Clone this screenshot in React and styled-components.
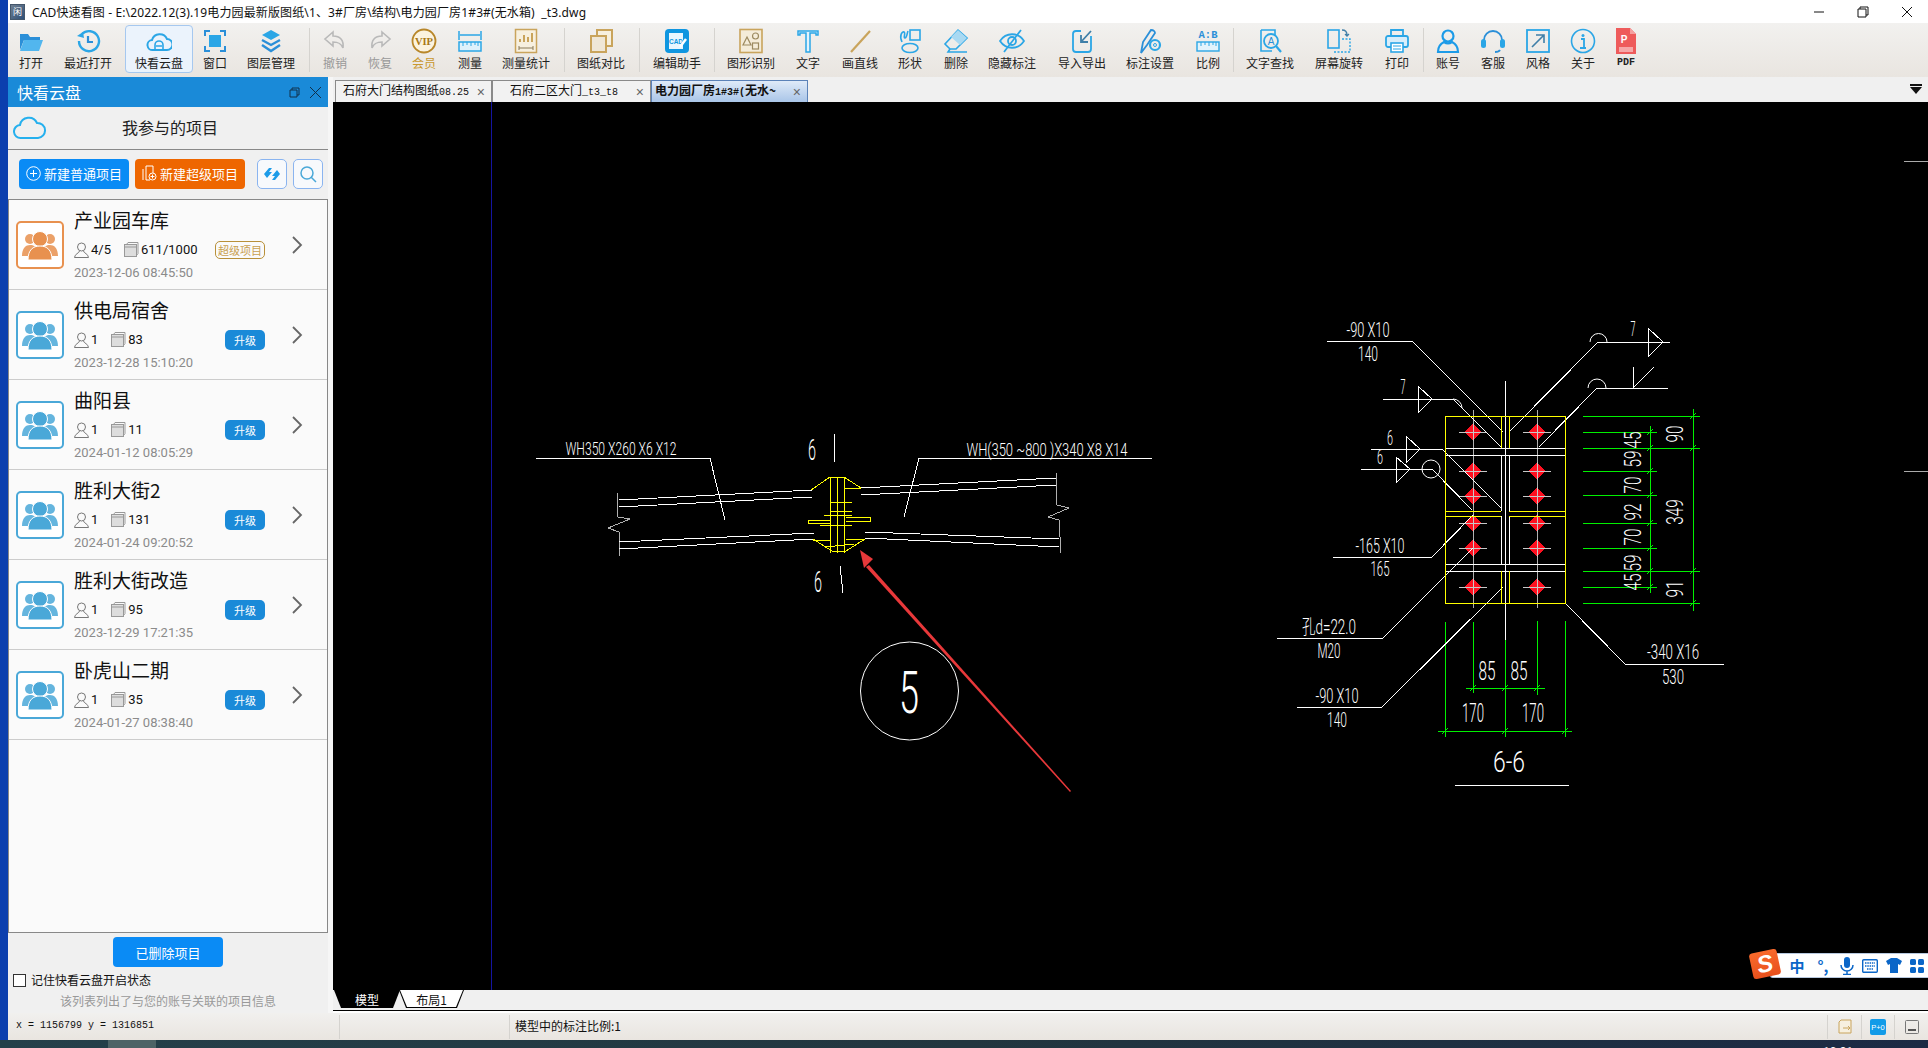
import React from 'react';
import styled, { createGlobalStyle } from 'styled-components';

const CJK = '"Noto Sans CJK SC", "Noto Sans", sans-serif';
const SKY = '#2ba6e6';
const TAN = '#c9a45c';

const GlobalStyle = createGlobalStyle`
    html, body { margin: 0; padding: 0; background: #0b3fae; }
    body { font-family: ${CJK}; color: #111; }
    * { box-sizing: border-box; }
`;

const Page = styled.div`
    width: 1928px;
    height: 1048px;
    display: flex;
    flex-direction: column;
    overflow: hidden;
`;
const Upper = styled.div`
    flex: 1;
    display: flex;
    min-height: 0;
    background: #0b3fae;
    padding-left: 8px;
`;
const AppWindow = styled.div`
    flex: 1;
    display: flex;
    flex-direction: column;
    min-width: 0;
`;
const TitleBar = styled.div`
    height: 23px;
    background: #fff;
    display: flex;
    align-items: center;
    padding-left: 2px;
    font-size: 12px;
    position: relative;
`;
const AppLogo = styled.div`
    width: 15px;
    height: 16px;
    margin-right: 7px;
    background: linear-gradient(135deg, #6f7f90, #2f4f78);
    border: 1px solid #44566a;
    color: #fff;
    font-size: 9px;
    line-height: 14px;
    text-align: center;
`;
const TitleText = styled.div`
    flex: 1;
    white-space: pre;
    letter-spacing: .13px;
    font-family: "Noto Sans", "Noto Sans CJK SC", sans-serif;
`;
const WindowButtons = styled.div`
    display: flex;
    align-items: center;
    gap: 32px;
    padding-right: 15px;
`;
const Toolbar = styled.div`
    height: 54px;
    display: flex;
    align-items: flex-start;
    padding-left: 1px;
    background: linear-gradient(#f2f1ef, #e9e5e0);
`;
const ToolButton = styled.div`
    width: ${p => p.$w}px;
    margin-left: ${p => p.$ml}px;
    margin-top: 2px;
    height: 48px;
    display: flex;
    flex-direction: column;
    align-items: center;
    padding-top: 2px;
    flex: none;
    border-radius: 4px;
    border: 1px solid ${p => (p.$active ? '#a6c8ef' : 'transparent')};
    background: ${p => (p.$active ? '#ebf3fc' : 'transparent')};
`;
const ToolIcon = styled.div`
    height: 26px;
    display: flex;
    align-items: center;
    justify-content: center;
`;
const ToolLabel = styled.div`
    font-size: 12px;
    line-height: 16px;
    margin-top: 1px;
    white-space: nowrap;
    color: ${p => p.$color || '#222'};
`;
const PdfLabel = styled(ToolLabel)`
    font: 700 10px/16px "Liberation Mono", monospace;
`;
const ToolSep = styled.div`
    width: 1px;
    height: 44px;
    margin: 5px 0 0 ${p => p.$ml}px;
    background: #d5d3cf;
    flex: none;
`;
const Body = styled.div`
    flex: 1;
    display: flex;
    min-height: 0;
    background: #f6f6f6;
`;
const Panel = styled.div`
    width: 320px;
    display: flex;
    flex-direction: column;
    background: #f0f0f0;
    flex: none;
`;
const PanelHeader = styled.div`
    height: 30px;
    background: #1a8ad8;
    color: #fff;
    display: flex;
    align-items: center;
    padding: 0 7px 0 9px;
    font-size: 16px;
`;
const PanelTitle = styled.div`
    flex: 1;
`;
const PanelTools = styled.div`
    display: flex;
    align-items: center;
    gap: 10px;
`;
const SubHeader = styled.div`
    height: 43px;
    display: flex;
    align-items: center;
    padding: 0 0 2px 5px;
    border-bottom: 1px solid #888;
`;
const SubTitle = styled.div`
    flex: 1;
    margin-left: -34px;
    text-align: center;
    font-size: 16px;
    color: #222;
`;
const ActionRow = styled.div`
    height: 49px;
    display: flex;
    align-items: center;
    padding: 0 5px 1px 11px;
`;
const ActionButton = styled.div`
    width: 110px;
    height: 30px;
    margin-right: 6px;
    padding-bottom: 2px;
    border-radius: 4px;
    background: ${p => p.$bg};
    color: #fff;
    font-size: 13px;
    display: flex;
    align-items: center;
    justify-content: center;
    gap: 3px;
`;
const IconButton = styled.div`
    width: 30px;
    height: 30px;
    margin-left: ${p => p.$ml}px;
    border-radius: 5px;
    border: 1px solid #8ab4f0;
    background: #f7f9fc;
    display: flex;
    align-items: center;
    justify-content: center;
`;
const ProjectList = styled.div`
    height: 734px;
    border: 1px solid #888;
    background: #fafafa;
    display: flex;
    flex-direction: column;
`;
const ProjectRow = styled.div`
    height: 90px;
    flex: none;
    display: flex;
    align-items: center;
    padding-left: 7px;
    border-bottom: 1px solid #ccc;
`;
const ProjectIcon = styled.div`
    width: 48px;
    height: 48px;
    border-radius: 5px;
    border: 2px solid ${p => p.$color};
    background: #fff;
    display: flex;
    align-items: center;
    justify-content: center;
    flex: none;
`;
const ProjectInfo = styled.div`
    width: 191px;
    height: 90px;
    margin-left: 10px;
    padding-top: 5px;
    flex: none;
`;
const ProjectName = styled.div`
    font-size: 19px;
    line-height: 30px;
    margin-bottom: 3px;
    color: #111;
`;
const MetaRow = styled.div`
    height: 24px;
    display: flex;
    align-items: center;
    font: 13px/24px Roboto, ${CJK};
    color: #111;
`;
const MetaValue = styled.span`
    margin: 0 13px 0 2px;
`;
const Badge = styled.div`
    margin-left: auto;
    flex: none;
    font-size: 11px;
    font-family: ${CJK};
    white-space: nowrap;
    display: flex;
    align-items: center;
    justify-content: center;
    border-radius: 5px;
    ${p => (p.$super
        ? 'width: 50px; height: 18px; border: 1px solid #b8903a; color: #c9a050;'
        : 'width: 40px; height: 20px; background: #1a8ad8; color: #fff;')}
`;
const ProjectDate = styled.div`
    font: 13px/22px Roboto, sans-serif;
    color: #8b8b8b;
`;
const Chevron = styled.div`
    margin-left: 27px;
    display: flex;
`;
const PanelFooter = styled.div`
    flex: 1;
    display: flex;
    flex-direction: column;
    align-items: flex-start;
`;
const DeletedButton = styled.div`
    width: 110px;
    height: 30px;
    margin: 4px 0 0 105px;
    background: #0a8bf5;
    color: #fff;
    border-radius: 4px;
    font-size: 13px;
    display: flex;
    align-items: center;
    justify-content: center;
`;
const RememberRow = styled.label`
    display: flex;
    align-items: center;
    gap: 5px;
    margin: 6px 0 0 5px;
    font-size: 12px;
    line-height: 14px;
`;
const CheckBox = styled.span`
    width: 13px;
    height: 13px;
    border: 1px solid #333;
    background: #fff;
`;
const PanelHint = styled.div`
    width: 100%;
    text-align: center;
    font-size: 12px;
    line-height: 16px;
    margin-top: 6px;
    color: #999;
`;
const Gutter = styled.div`
    width: 5px;
    flex: none;
`;
const Workspace = styled.div`
    flex: 1;
    display: flex;
    flex-direction: column;
    min-width: 0;
    background: #f0f0f0;
`;
const TabStrip = styled.div`
    height: 25px;
    display: flex;
    padding: 3px 0 0 2px;
    position: relative;
`;
const DocTab = styled.div`
    width: ${p => p.$w}px;
    height: 22px;
    display: flex;
    align-items: center;
    padding: 0 6px 0 ${p => p.$pl}px;
    font: ${p => (p.$active ? 700 : 400)} 12px/20px ${CJK};
    white-space: nowrap;
    overflow: hidden;
    border: 1px solid ${p => (p.$active ? '#5b82b8' : '#8a8a8a')};
    border-bottom: none;
    background: ${p => (p.$active ? 'linear-gradient(#dfeaf8, #a9c5e8)' : '#f2f2f2')};
`;
const TabName = styled.span`
    flex: 1;
    overflow: hidden;
`;
const TabLatin = styled.span`
    font-family: "Liberation Mono", monospace;
    font-size: 10px;
`;
const TabClose = styled.span`
    color: #666;
    font: 14px/14px "Liberation Sans", sans-serif;
`;
const TabMenu = styled.div`
    position: absolute;
    right: 6px;
    top: 7px;
    display: flex;
    flex-direction: column;
    align-items: center;
    gap: 1px;
`;
const TabMenuBar = styled.div`
    width: 12px;
    height: 2px;
    background: #111;
`;
const TabMenuArrow = styled.div`
    border-left: 6px solid transparent;
    border-right: 6px solid transparent;
    border-top: 7px solid #111;
`;
const Canvas = styled.div`
    height: 888px;
    background: #000;
    position: relative;
    flex: none;
`;
const Drawing = styled.svg`
    display: block;
    width: 100%;
    height: 100%;
`;
const CadLabel = styled.text`
    fill: #fff;
    font-family: Roboto, ${CJK};
    font-weight: 300;
    text-anchor: middle;
    dominant-baseline: central;
`;
const ImeBar = styled.div`
    position: absolute;
    right: 0;
    bottom: 12px;
    width: 158px;
    height: 25px;
    background: #fff;
    border: 1px solid #b7c8de;
    border-right: none;
    border-radius: 3px 0 0 3px;
    display: flex;
    align-items: center;
    padding-left: 17px;
    gap: 8px;
    color: #0a66c8;
`;
const ImeLogo = styled.div`
    position: absolute;
    left: -20px;
    top: -3px;
    width: 28px;
    height: 26px;
    border-radius: 3px;
    transform: rotate(-12deg);
    background: linear-gradient(#f96a2c, #e8501c);
    color: #fff;
    font: italic 700 24px/25px "Liberation Sans", sans-serif;
    text-align: center;
`;
const ImeChar = styled.span`
    width: 18px;
    font: 700 15px/18px ${CJK};
    text-align: center;
`;
const LayoutTabs = styled.div`
    height: 23px;
    display: flex;
    align-items: flex-start;
    background: #f0f0f0;
    padding-left: 1px;
    box-shadow: inset 0 -2px 0 #fff, inset 0 -3px 0 #000;
`;
const LayoutTab = styled.div`
    width: ${p => p.$w}px;
    height: 18px;
    margin-right: ${p => p.$mr}px;
    background: #000;
    clip-path: polygon(0 0, 100% 0, calc(100% - 7px) 100%, 7px 100%);
    position: relative;
    display: flex;
    align-items: center;
    justify-content: center;
    font-size: 12px;
    color: ${p => (p.$active ? '#fff' : '#111')};
    &::before {
        content: '';
        display: ${p => (p.$active ? 'none' : 'block')};
        position: absolute;
        inset: 0 1px 1px;
        background: #fff;
        clip-path: polygon(0 0, 100% 0, calc(100% - 7px) 100%, 7px 100%);
    }
`;
const LayoutTabText = styled.span`
    position: relative;
`;
const StatusBar = styled.div`
    height: 27px;
    display: flex;
    align-items: center;
    background: linear-gradient(#f1f0ee, #e9e5e0);
`;
const StatusCoords = styled.div`
    width: 331px;
    padding: 0 0 2px 8px;
    font: 10px/14px "Liberation Mono", monospace;
    color: #111;
`;
const StatusSep = styled.div`
    width: 1px;
    height: 24px;
    background: #d5d3cf;
    flex: none;
`;
const StatusGap = styled.div`
    width: 169px;
`;
const StatusScale = styled.div`
    flex: 1;
    padding: 0 0 2px 5px;
    font-size: 12px;
`;
const StatusIcon = styled.div`
    width: ${p => p.$w}px;
    display: flex;
    justify-content: center;
`;
const Taskbar = styled.div`
    height: 8px;
    flex: none;
    background: linear-gradient(90deg, #24404a, #22363f 50%, #1c2a44);
    position: relative;
    display: flex;
    overflow: hidden;
`;
const TaskItem = styled.div`
    width: 48px;
    margin-left: 108px;
    background: #4d6366;
`;
const TaskClock = styled.div`
    position: absolute;
    left: 1823px;
    top: 5px;
    color: #fff;
    font: 12px/14px Roboto, sans-serif;
`;

// toolbar icons, all drawn on a 26x26 grid
const Svg = ({ children, w = 26, h = 26 }) => (
    <svg width={w} height={h} viewBox={`0 0 ${w} ${h}`} fill="none">{children}</svg>
);

const icons = {
    open: <Svg><path d="M2 6h8l2 3h10v3H6l-4 10z" fill="#2b8fd8" /><path d="M6 12h19l-4 11H2z" fill="#52b6ee" /></Svg>,
    recent: <Svg><path d="M7 6a10 10 0 1 1-3 7" stroke={SKY} strokeWidth="2.4" /><path d="M2 8l6-4 1 6z" fill={SKY} /><path d="M13 8v6h5" stroke="#2b8fd8" strokeWidth="2.2" /></Svg>,
    cloud: <Svg><path d="M7 22a5 5 0 0 1-1-10 8 8 0 0 1 15-1 5.500 5.500 0 0 1 0 11z" stroke={SKY} strokeWidth="2" /><path d="M9 22v-5a4 4 0 0 1 8 0v5M10 18h6" stroke={SKY} strokeWidth="1.6" /></Svg>,
    window: <Svg><rect x="7" y="7" width="12" height="12" fill={SKY} /><path d="M3 8V3h5M18 3h5v5M23 18v5h-5M8 23H3v-5" stroke="#2b8fd8" strokeWidth="2" /></Svg>,
    layers: <Svg><path d="M13 2l9 5-9 5-9-5z" fill={SKY} /><path d="M4 12l9 5 9-5M4 17l9 6 9-6" stroke="#2b8fd8" strokeWidth="2.4" /></Svg>,
    undo: <Svg><path d="M11 4L3 11l8 7v-4c5 0 8 1 10 6 1-8-3-12-10-12z" stroke="#b9b9b9" strokeWidth="1.6" /></Svg>,
    redo: <Svg><path d="M15 4l8 7-8 7v-4c-5 0-8 1-10 6-1-8 3-12 10-12z" stroke="#b9b9b9" strokeWidth="1.6" /></Svg>,
    vip: <Svg><circle cx="13" cy="13" r="11.500" stroke="#b8872a" strokeWidth="1.800" fill="#fbf3df" /><text x="13" y="17" textAnchor="middle" fontFamily="Liberation Serif" fontWeight="700" fontSize="10.500" fill="#a87716">VIP</text></Svg>,
    measure: <Svg><path d="M2 3v9M24 3v9M3 7h20" stroke={SKY} strokeWidth="1.500" /><rect x="2" y="14" width="22" height="9" stroke={SKY} strokeWidth="1.500" fill="#dff1fb" /><path d="M6 14v4M10 14v3M14 14v4M18 14v3M21 14v4" stroke={SKY} /></Svg>,
    stats: <Svg><rect x="2.500" y="1.500" width="21" height="23" stroke={TAN} strokeWidth="1.500" fill="#f7f0df" /><path d="M7 14v-3M11 14V7M15 14v-5M19 14V5" stroke={TAN} strokeWidth="2" /><path d="M6 20h14M6 18v4M20 18v4" stroke="#8a7a58" /></Svg>,
    compare: <Svg><rect x="9" y="2" width="15" height="16" stroke={TAN} strokeWidth="2" fill="#f7f0df" /><rect x="3" y="8" width="15" height="16" stroke={TAN} strokeWidth="2" fill="#efe7d7" /></Svg>,
    assist: <Svg><rect x="1" y="1" width="24" height="24" rx="4" fill="#0f96e0" /><rect x="5" y="5" width="14" height="16" fill="#e8f6fe" /><text x="12" y="16" textAnchor="middle" fontFamily="Liberation Sans" fontWeight="700" fontSize="6.500" fill="#0f96e0">CAD</text><path d="M16 19l6-8" stroke="#fff" strokeWidth="2.500" /></Svg>,
    figure: <Svg><rect x="2" y="1.500" width="22" height="23" stroke={TAN} strokeWidth="1.600" fill="#f4ecd9" /><path d="M9 9l4 8H5z" stroke="#9c8a60" strokeWidth="1.200" /><circle cx="17.500" cy="8" r="3" stroke="#9c8a60" strokeWidth="1.200" /><rect x="14.500" y="15" width="6" height="6" stroke="#9c8a60" strokeWidth="1.200" /></Svg>,
    text: <Svg><path d="M3 7V3h20v4H21V5h-6v19h-4V5H5v2z" stroke={SKY} strokeWidth="1.500" fill="#e2f3fc" /></Svg>,
    line: <Svg><path d="M4 24L23 3" stroke={TAN} strokeWidth="2.200" /></Svg>,
    shape: <Svg><rect x="13" y="2" width="10" height="10" stroke={SKY} strokeWidth="1.600" /><ellipse cx="13" cy="20" rx="8" ry="4.500" stroke={SKY} strokeWidth="1.600" /><path d="M5 14c-3-6 0-11 2-10 2 1-1 6 1 6s2-5 3-7" stroke={SKY} strokeWidth="1.600" /></Svg>,
    eraser: <Svg><path d="M15 2l9 8-11 11H7L2 16z" stroke={SKY} strokeWidth="1.600" /><path d="M15 2l9 8-7 7-9-8z" fill="#a9d9f2" /><path d="M7 21l-2 3h19" stroke={SKY} strokeWidth="1.600" /></Svg>,
    hide: <Svg><path d="M1 13c6-9 18-9 24 0-6 9-18 9-24 0z" stroke={SKY} strokeWidth="1.800" /><circle cx="13" cy="13" r="4" stroke={SKY} strokeWidth="1.800" /><path d="M5 24L22 2" stroke={SKY} strokeWidth="1.800" /></Svg>,
    transfer: <Svg><path d="M12 3H7a3 3 0 0 0-3 3v15a3 3 0 0 0 3 3h12a3 3 0 0 0 3-3V8" stroke={SKY} strokeWidth="1.800" /><path d="M22 3L12 14M12 7v7h7" stroke="#3f7fa8" strokeWidth="1.800" /></Svg>,
    settings: <Svg><path d="M4 25l2-11 8-12c3 0 4 2 4 3l-8 12z" stroke="#2b8fd8" strokeWidth="1.800" /><circle cx="18" cy="17" r="5" stroke={SKY} strokeWidth="2.200" /><circle cx="18" cy="17" r="1.500" stroke={SKY} /></Svg>,
    ratio: <Svg><text x="13" y="10" textAnchor="middle" fontFamily="Liberation Mono" fontWeight="700" fontSize="10.500" fill="#2b8fd8">A:B</text><rect x="2" y="14" width="22" height="9" stroke={SKY} strokeWidth="1.400" fill="#e2f3fc" /><path d="M6 14v4M10 14v3M14 14v4M18 14v3M21 14v4" stroke={SKY} /></Svg>,
    find: <Svg><path d="M4 2h14v6M4 2v21h11" stroke={SKY} strokeWidth="1.600" /><circle cx="14" cy="13" r="7" stroke={SKY} strokeWidth="1.800" /><text x="14" y="17" textAnchor="middle" fontFamily="Liberation Sans" fontSize="10" fill="#2b8fd8">A</text><path d="M19 18l5 6" stroke={SKY} strokeWidth="2.200" /></Svg>,
    rotate: <Svg><rect x="2" y="2" width="11" height="18" stroke={SKY} strokeWidth="1.600" /><path d="M8 24h16V11h-9" stroke={SKY} strokeWidth="1.400" strokeDasharray="2 1.500" /><path d="M16 2c3 0 5 2 5 5M19 6l2 2 2-2" stroke="#3f7fa8" strokeWidth="1.300" /></Svg>,
    print: <Svg><path d="M7 8V2h12v6" stroke={SKY} strokeWidth="1.800" /><rect x="2" y="8" width="22" height="11" rx="2" stroke={SKY} strokeWidth="1.800" fill="#d8eefb" /><rect x="7" y="15" width="12" height="9" stroke={SKY} strokeWidth="1.600" fill="#fff" /><path d="M9 18h8M9 21h8" stroke={SKY} /></Svg>,
    user: <Svg><circle cx="13" cy="8" r="5.500" stroke="#1c9be8" strokeWidth="2.200" /><path d="M3 24c0-6 4-9 6-10 3 2 5 2 8 0 2 1 6 4 6 10z" stroke="#1c9be8" strokeWidth="2.200" /></Svg>,
    service: <Svg><path d="M4 14v-2a9 9 0 0 1 18 0v2M20 22c-1 2-3 2-5 2" stroke="#2b8fd8" strokeWidth="1.800" /><rect x="1" y="11" width="5" height="9" rx="2.500" fill={SKY} /><rect x="20" y="11" width="5" height="9" rx="2.500" fill={SKY} /></Svg>,
    style: <Svg><rect x="2" y="2" width="22" height="22" stroke={SKY} strokeWidth="1.800" /><path d="M7 19L19 7M11 7h8v8" stroke="#3f7fa8" strokeWidth="1.600" /></Svg>,
    about: <Svg><circle cx="13" cy="13" r="11.500" stroke={SKY} strokeWidth="1.600" /><circle cx="13" cy="7.500" r="1.500" fill={SKY} /><path d="M11 11h3v9M10 20h6" stroke={SKY} strokeWidth="1.800" /></Svg>,
    pdf: <Svg><path d="M3 0h14l6 6v20H3z" fill="#ee5b5b" /><path d="M17 0l6 6h-6z" fill="#f6a0a0" /><rect x="6" y="19" width="14" height="5" fill="#f6a8a8" /><text x="11" y="15" textAnchor="middle" fontFamily="Liberation Sans" fontWeight="700" fontSize="10" fill="#fff">P</text></Svg>,
};

const tools = [
    { label: '打开', icon: 'open', w: 44, ml: 0 },
    { label: '最近打开', icon: 'recent', w: 60, ml: 5 },
    { label: '快看云盘', icon: 'cloud', w: 68, ml: 7, active: true },
    { label: '窗口', icon: 'window', w: 40, ml: 2 },
    { label: '图层管理', icon: 'layers', w: 60, ml: 6 },
    { sep: true, ml: 8 },
    { label: '撤销', icon: 'undo', w: 40, ml: 5, color: '#999' },
    { label: '恢复', icon: 'redo', w: 40, ml: 5, color: '#999' },
    { label: '会员', icon: 'vip', w: 40, ml: 4, color: '#c9982f' },
    { label: '测量', icon: 'measure', w: 40, ml: 6 },
    { label: '测量统计', icon: 'stats', w: 60, ml: 6 },
    { sep: true, ml: 8 },
    { label: '图纸对比', icon: 'compare', w: 60, ml: 6 },
    { sep: true, ml: 8 },
    { label: '编辑助手', icon: 'assist', w: 60, ml: 7 },
    { sep: true, ml: 7 },
    { label: '图形识别', icon: 'figure', w: 60, ml: 6 },
    { label: '文字', icon: 'text', w: 40, ml: 7 },
    { label: '画直线', icon: 'line', w: 50, ml: 7 },
    { label: '形状', icon: 'shape', w: 40, ml: 5 },
    { label: '删除', icon: 'eraser', w: 40, ml: 6 },
    { label: '隐藏标注', icon: 'hide', w: 60, ml: 6 },
    { label: '导入导出', icon: 'transfer', w: 60, ml: 10 },
    { label: '标注设置', icon: 'settings', w: 60, ml: 8 },
    { label: '比例', icon: 'ratio', w: 40, ml: 8 },
    { sep: true, ml: 5 },
    { label: '文字查找', icon: 'find', w: 60, ml: 6 },
    { label: '屏幕旋转', icon: 'rotate', w: 60, ml: 9 },
    { label: '打印', icon: 'print', w: 40, ml: 8 },
    { sep: true, ml: 6 },
    { label: '账号', icon: 'user', w: 40, ml: 4 },
    { label: '客服', icon: 'service', w: 40, ml: 5 },
    { label: '风格', icon: 'style', w: 40, ml: 5 },
    { label: '关于', icon: 'about', w: 40, ml: 5 },
    { label: 'PDF', icon: 'pdf', w: 40, ml: 3, mono: true },
];

const projects = [
    { name: '产业园车库', members: '4/5', files: '611/1000', date: '2023-12-06 08:45:50', isSuper: true },
    { name: '供电局宿舍', members: '1', files: '83', date: '2023-12-28 15:10:20' },
    { name: '曲阳县', members: '1', files: '11', date: '2024-01-12 08:05:29' },
    { name: '胜利大街2', members: '1', files: '131', date: '2024-01-24 09:20:52' },
    { name: '胜利大街改造', members: '1', files: '95', date: '2023-12-29 17:21:35' },
    { name: '卧虎山二期', members: '1', files: '35', date: '2024-01-27 08:38:40' },
];

const PeopleIcon = ({ color }) => (
    <svg width="36" height="30" viewBox="0 0 36 30">
        <circle cx="8" cy="9" r="5" fill={color} opacity=".85" />
        <circle cx="28" cy="9" r="5" fill={color} opacity=".85" />
        <path d="M0 26c0-8 4-11 8-11s6 2 6 4l-4 7zM36 26c0-8-4-11-8-11s-6 2-6 4l4 7z" fill={color} opacity=".85" />
        <circle cx="18" cy="9" r="7.500" fill={color} stroke="#fff" />
        <path d="M6 30c0-10 5-14 12-14s12 4 12 14z" fill={color} stroke="#fff" />
    </svg>
);
const PersonGlyph = () => (
    <svg width="15" height="16" viewBox="0 0 15 16" fill="none" style={{ flex: 'none' }}>
        <circle cx="7.500" cy="5" r="4" stroke="#777" />
        <path d="M5.500 9c0 2-5 3-5 6.500h14c0-3.500-5-4.500-5-6.500" stroke="#777" />
    </svg>
);
const FolderGlyph = () => (
    <svg width="15" height="15" viewBox="0 0 15 15" fill="none" style={{ flex: 'none' }}>
        <path d="M2.500 2.500L4 .500h10v11l-1.500 2" stroke="#999" />
        <rect x=".500" y="2.500" width="12" height="12" fill="#ddd" stroke="#999" />
        <path d="M.500 5h12" stroke="#999" />
    </svg>
);

// CAD sheet, in page coordinates so the numbers read off the screen directly
const whiteLines = [
    '1327,341 1412,341 1503,432', '1670,342 1598,342 1510,431', '1668,388 1597,388 1539,447',
    '1383,399 1453,399 1501,447', '1371,449 1442,449 1501,508', '1361,469 1432,469 1472,510',
    '1333,557 1432,557 1473,515', '1277,638 1383,638 1473,548', '1297,707 1382,707 1503,587',
    '1566,604 1625,664 1724,664', '1648,328 1663,342 1648,357 1648,328', '1633,367 1633,388 1654,367',
    '1418,386 1432,399 1418,413 1418,386', '1406,436 1420,449 1406,463 1406,436', '1396,457 1410,469 1396,483 1396,457',
    '1445,448 1565,448', '1445,455 1565,455', '1445,564 1565,564', '1445,571 1565,571',
    '1501,455 1501,511', '1509,455 1509,511', '1501,516 1501,564', '1509,516 1509,564', '1505,381 1505,640',
    '1455,785 1569,785',
    '536,458 710,458 725,520', '1152,458 919,458 904,517',
    '834,434 835,462', '840,566 843,593',
    '619,500 812,490', '619,507 812,497', '861,488 1056,478', '861,495 1056,485',
    '619,542 814,533', '619,549 814,539', '865,532 1059,539', '865,538 1059,547',
];
const grayLines = [
    '617,493 618,517 630,519 608,528 619,532 620,556', '1056,472 1057,505 1069,508 1048,517 1059,520 1061,553',
    '1473,410 1473,608', '1537,410 1537,608',
];
const yellowLines = [
    '1445,416 1565,416 1565,603 1445,603 1445,416', '1501,416 1501,448', '1509,416 1509,448',
    '1445,511 1501,511', '1445,516 1501,516', '1509,511 1565,511', '1509,516 1565,516',
    '1501,571 1501,603', '1509,571 1509,603',
    '811,490 830,477 844,477 861,488', '830,477 830,553', '837,477 837,553', '844,477 844,553',
    '813,539 832,551 846,551 865,539', '845,488 861,488', '831,502 852,502', '830,511 852,511', '824,515 852,515',
    '808,520 830,520 830,523 808,523 808,520', '846,517 870,517 870,521 846,521', '820,525 852,525',
    '813,540 831,540', '846,539 864,539', '825,547 854,544',
];
const greenLines = [
    ...[432, 471, 495, 523, 548, 587].map(y => `1583,${y} 1657,${y}`),
    ...[416, 448, 571, 603].map(y => `1583,${y} 1700,${y}`),
    '1650,426 1650,593', '1693,409 1693,611',
    '1445,622 1445,737', '1473,622 1473,693', '1505,640 1505,737', '1537,621 1537,695', '1565,621 1565,737',
    '1466,688 1545,688', '1438,731 1572,731',
];
const tickPoints = [
    ...[416, 448, 571, 603].map(y => [1693, y]), ...[432, 448, 471, 495, 523, 548, 571, 587].map(y => [1650, y]),
    [1473, 688], [1505, 688], [1537, 688], [1445, 731], [1505, 731], [1565, 731],
];
const boltRows = [432, 471, 496, 523, 548, 587];
const labels = [
    ['-90 X10', 1368, 330, 43, 21], ['140', 1368, 354, 20, 21], ['7', 1633, 329, 5, 21], ['7', 1403, 387, 5, 21],
    ['6', 1390, 438, 6, 21], ['6', 1380, 457, 6, 21], ['-165 X10', 1380, 546, 49, 21], ['165', 1380, 569, 19, 21],
    ['孔d=22.0', 1329, 627, 54, 20], ['M20', 1329, 651, 23, 21], ['-90 X10', 1337, 696, 43, 21], ['140', 1337, 720, 20, 21],
    ['-340 X16', 1673, 652, 52, 21], ['530', 1673, 677, 22, 21],
    ['85', 1487, 671, 17, 25], ['85', 1519, 671, 17, 25], ['170', 1473, 713, 22, 25], ['170', 1533, 713, 22, 25],
    ['6-6', 1509, 761, 32, 30],
    ['WH350 X260 X6 X12', 621, 448, 111, 19], ['WH(350 ~800 )X340 X8 X14', 1047, 449, 161, 19],
    ['6', 812, 449, 8, 30], ['6', 818, 581, 8, 30], ['5', 909, 692, 20, 60],
];
const verticalLabels = [
    ['45', 1633, 440], ['59', 1633, 459], ['70', 1633, 485], ['92', 1633, 512], ['70', 1633, 537], ['59', 1633, 563], ['45', 1633, 582],
    ['90', 1675, 434], ['349', 1675, 512], ['91', 1675, 589],
];

const Polylines = ({ items, color, width = 1 }) => items.map(points => (
    <polyline key={points} points={points} fill="none" stroke={color} strokeWidth={width} />
));

const CadSheet = () => (
    <Drawing viewBox="333 102 1595 888">
        <g shapeRendering="crispEdges">
            <line x1="491.500" y1="102" x2="491.500" y2="990" stroke="#1414a0" />
            <line x1="1904" y1="161" x2="1928" y2="161" stroke="#aaa" />
            <line x1="1904" y1="471" x2="1928" y2="471" stroke="#aaa" />
            <Polylines items={grayLines} color="#b0b0b0" />
            <Polylines items={greenLines} color="#00f000" />
            {tickPoints.map(([x, y]) => (
                <line key={`${x}-${y}`} x1={x - 3} y1={y + 3} x2={x + 3} y2={y - 3} stroke="#00f000" />
            ))}
            {boltRows.map(y => [1473, 1537].map(x => (
                <g key={`${x}-${y}`}>
                    <polygon points={`${x},${y - 9} ${x + 8},${y} ${x},${y + 9} ${x - 8},${y}`} fill="#ff1020" />
                    <path d={`M${x - 14} ${y}H${x + 14}M${x} ${y - 9}V${y + 9}`} stroke="#c8c8c8" />
                </g>
            )))}
            <Polylines items={whiteLines} color="#fff" />
            <Polylines items={yellowLines} color="#ffff00" />
        </g>
        <path d="M1590 342a8.500 8.500 0 0 1 17 0M1588 388a9 9 0 0 1 18 0M1453 399a9 9 0 0 1 9 9" fill="none" stroke="#fff" />
        <circle cx="1431" cy="469" r="9" fill="none" stroke="#fff" />
        <circle cx="909.500" cy="691" r="49" fill="none" stroke="#fff" />
        <polygon points="1070,792 1071,791 869,565 866,567" fill="#e8383a" />
        <polygon points="860,550 873,559 864,568" fill="#e8383a" />
        {labels.map(([text, x, y, w, size]) => (
            <CadLabel key={`${text}-${x}-${y}`} x={x} y={y} fontSize={size} textLength={w} lengthAdjust="spacingAndGlyphs">{text}</CadLabel>
        ))}
        {verticalLabels.map(([text, x, y]) => (
            <CadLabel key={`${text}-${y}`} x={x} y={y} fontSize="24" textLength={text.length * 8.500} lengthAdjust="spacingAndGlyphs" transform={`rotate(-90 ${x} ${y})`}>{text}</CadLabel>
        ))}
    </Drawing>
);

export default function App() {
    return (
        <Page>
            <GlobalStyle />
            <Upper>
                <AppWindow>
                    <TitleBar>
                        <AppLogo>闲</AppLogo>
                        <TitleText>CAD快速看图 - E:\2022.12(3).19电力园最新版图纸\1、3#厂房\结构\电力园厂房1#3#(无水箱)  _t3.dwg</TitleText>
                        <WindowButtons>
                            <svg width="12" height="12" viewBox="0 0 12 12"><path d="M1 6h10" stroke="#111" /></svg>
                            <svg width="12" height="12" viewBox="0 0 12 12" fill="none"><path d="M3 3V1h8v8H9M1 3h8v8H1z" stroke="#111" /></svg>
                            <svg width="12" height="12" viewBox="0 0 12 12"><path d="M1 1l10 10M11 1L1 11" stroke="#111" /></svg>
                        </WindowButtons>
                    </TitleBar>
                    <Toolbar>
                        {tools.map((t, i) => (t.sep ? <ToolSep key={i} $ml={t.ml} /> : (
                            <ToolButton key={t.label} $w={t.w} $ml={t.ml} $active={t.active}>
                                <ToolIcon>{icons[t.icon]}</ToolIcon>
                                {t.mono ? <PdfLabel>{t.label}</PdfLabel> : <ToolLabel $color={t.color}>{t.label}</ToolLabel>}
                            </ToolButton>
                        )))}
                    </Toolbar>
                    <Body>
                        <Panel>
                            <PanelHeader>
                                <PanelTitle>快看云盘</PanelTitle>
                                <PanelTools>
                                    <svg width="11" height="11" viewBox="0 0 11 11" fill="none"><path d="M3 3V1h7v7H8M1 3h7v7H1z" stroke="#10304a" /></svg>
                                    <svg width="11" height="11" viewBox="0 0 11 11"><path d="M0 0l11 11M11 0L0 11" stroke="#10304a" /></svg>
                                </PanelTools>
                            </PanelHeader>
                            <SubHeader>
                                <svg width="33" height="25" viewBox="0 0 33 25" fill="none"><path d="M8 23a6.500 6.500 0 0 1-1-13A9 9 0 0 1 24 8a7.500 7.500 0 0 1 1 15z" stroke="#25b0ee" strokeWidth="2" /></svg>
                                <SubTitle>我参与的项目</SubTitle>
                            </SubHeader>
                            <ActionRow>
                                <ActionButton $bg="#0a8bf5">
                                    <svg width="15" height="15" viewBox="0 0 15 15" fill="none"><circle cx="7.500" cy="7.500" r="6.800" stroke="#fff" /><path d="M7.500 4v7M4 7.500h7" stroke="#fff" /></svg>
                                    新建普通项目
                                </ActionButton>
                                <ActionButton $bg="#ee6600">
                                    <svg width="15" height="16" viewBox="0 0 15 16" fill="none"><path d="M4 1h7v7M4 1v14h4M1 4v11" stroke="#fff" /><circle cx="10.500" cy="11.500" r="3.500" stroke="#fff" /><path d="M10.500 9.500v4M8.500 11.500h4" stroke="#fff" /></svg>
                                    新建超级项目
                                </ActionButton>
                                <IconButton $ml={6}>
                                    <svg width="18" height="18" viewBox="0 0 18 18"><path d="M1 9l5-6h3L6 7h3L4 13zM17 9l-5 6H9l3-4H9l5-6z" fill="#1c9be8" /></svg>
                                </IconButton>
                                <IconButton $ml={6}>
                                    <svg width="18" height="18" viewBox="0 0 18 18" fill="none"><circle cx="8" cy="8" r="6" stroke="#4aa8d8" strokeWidth="1.500" /><path d="M12 12l5 5" stroke="#4aa8d8" strokeWidth="1.500" /></svg>
                                </IconButton>
                            </ActionRow>
                            <ProjectList>
                                {projects.map(p => (
                                    <ProjectRow key={p.name}>
                                        <ProjectIcon $color={p.isSuper ? '#e8914f' : '#4aa8d8'}>
                                            <PeopleIcon color={p.isSuper ? '#e8914f' : '#4aa8d8'} />
                                        </ProjectIcon>
                                        <ProjectInfo>
                                            <ProjectName>{p.name}</ProjectName>
                                            <MetaRow>
                                                <PersonGlyph />
                                                <MetaValue>{p.members}</MetaValue>
                                                <FolderGlyph />
                                                <MetaValue>{p.files}</MetaValue>
                                                <Badge $super={p.isSuper}>{p.isSuper ? '超级项目' : '升级'}</Badge>
                                            </MetaRow>
                                            <ProjectDate>{p.date}</ProjectDate>
                                        </ProjectInfo>
                                        <Chevron>
                                            <svg width="11" height="18" viewBox="0 0 11 18" fill="none"><path d="M1 1l8 8-8 8" stroke="#666" strokeWidth="1.800" /></svg>
                                        </Chevron>
                                    </ProjectRow>
                                ))}
                            </ProjectList>
                            <PanelFooter>
                                <DeletedButton>已删除项目</DeletedButton>
                                <RememberRow><CheckBox />记住快看云盘开启状态</RememberRow>
                                <PanelHint>该列表列出了与您的账号关联的项目信息</PanelHint>
                            </PanelFooter>
                        </Panel>
                        <Gutter />
                        <Workspace>
                            <TabStrip>
                                <DocTab $w={157} $pl={7}><TabName>石府大门结构图纸<TabLatin>08.25</TabLatin></TabName><TabClose>×</TabClose></DocTab>
                                <DocTab $w={159} $pl={17}><TabName>石府二区大门<TabLatin>_t3_t8</TabLatin></TabName><TabClose>×</TabClose></DocTab>
                                <DocTab $w={157} $pl={3} $active><TabName>电力园厂房<TabLatin>1#3#(</TabLatin>无水~</TabName><TabClose>×</TabClose></DocTab>
                                <TabMenu><TabMenuBar /><TabMenuArrow /></TabMenu>
                            </TabStrip>
                            <Canvas>
                                <CadSheet />
                                <ImeBar>
                                    <ImeLogo>S</ImeLogo>
                                    <ImeChar>中</ImeChar>
                                    <ImeChar>°,</ImeChar>
                                    <svg width="14" height="18" viewBox="0 0 14 18" fill="none"><rect x="4" y="0" width="6" height="11" rx="3" fill="#0a66c8" /><path d="M1 8a6 6 0 0 0 12 0M7 14v4M3 17.500h8" stroke="#0a66c8" strokeWidth="1.500" /></svg>
                                    <svg width="16" height="14" viewBox="0 0 16 14" fill="none"><rect x=".700" y=".700" width="14.600" height="12.600" rx="1" stroke="#0a66c8" strokeWidth="1.400" /><path d="M3 4h10M3 7h10M5 10h6" stroke="#0a66c8" strokeWidth="1.600" strokeDasharray="1.500 .800" /></svg>
                                    <svg width="16" height="15" viewBox="0 0 16 15"><path d="M5 0h6l5 3-2 4-2-1v9H4V6L2 7 0 3z" fill="#0a66c8" /></svg>
                                    <svg width="14" height="14" viewBox="0 0 14 14" fill="#0a66c8"><rect width="6" height="6" rx="1.500" /><rect x="8" width="6" height="6" rx="1.500" /><rect y="8" width="6" height="6" rx="1.500" /><rect x="8" y="8" width="6" height="6" rx="1.500" /></svg>
                                </ImeBar>
                            </Canvas>
                            <LayoutTabs>
                                <LayoutTab $w={66} $mr={-1} $active><LayoutTabText>模型</LayoutTabText></LayoutTab>
                                <LayoutTab $w={65} $mr={0}><LayoutTabText>布局1</LayoutTabText></LayoutTab>
                            </LayoutTabs>
                        </Workspace>
                    </Body>
                    <StatusBar>
                        <StatusCoords>x = 1156799 y = 1316851</StatusCoords>
                        <StatusSep />
                        <StatusGap />
                        <StatusSep />
                        <StatusScale>模型中的标注比例:1</StatusScale>
                        <StatusSep />
                        <StatusIcon $w={33}>
                            <svg width="14" height="15" viewBox="0 0 14 15" fill="none"><path d="M3 1h10v13H1V3z" stroke={TAN} fill="#f7f0df" /><path d="M5 9h7M10 7l2 2-2 2" stroke={TAN} /></svg>
                        </StatusIcon>
                        <StatusSep />
                        <StatusIcon $w={32}>
                            <svg width="16" height="16" viewBox="0 0 16 16"><rect width="16" height="16" rx="2" fill="#129be8" /><text x="8" y="11" textAnchor="middle" fontFamily="Liberation Sans" fontSize="7.500" fill="#fff">P+0</text></svg>
                        </StatusIcon>
                        <StatusSep />
                        <StatusIcon $w={33}>
                            <svg width="14" height="14" viewBox="0 0 14 14" fill="none"><rect x=".500" y=".500" width="13" height="13" rx="1" stroke="#777" /><path d="M3 10h8" stroke="#555" strokeWidth="2" /></svg>
                        </StatusIcon>
                    </StatusBar>
                </AppWindow>
            </Upper>
            <Taskbar>
                <TaskItem />
                <TaskClock>10:21</TaskClock>
            </Taskbar>
        </Page>
    );
}
